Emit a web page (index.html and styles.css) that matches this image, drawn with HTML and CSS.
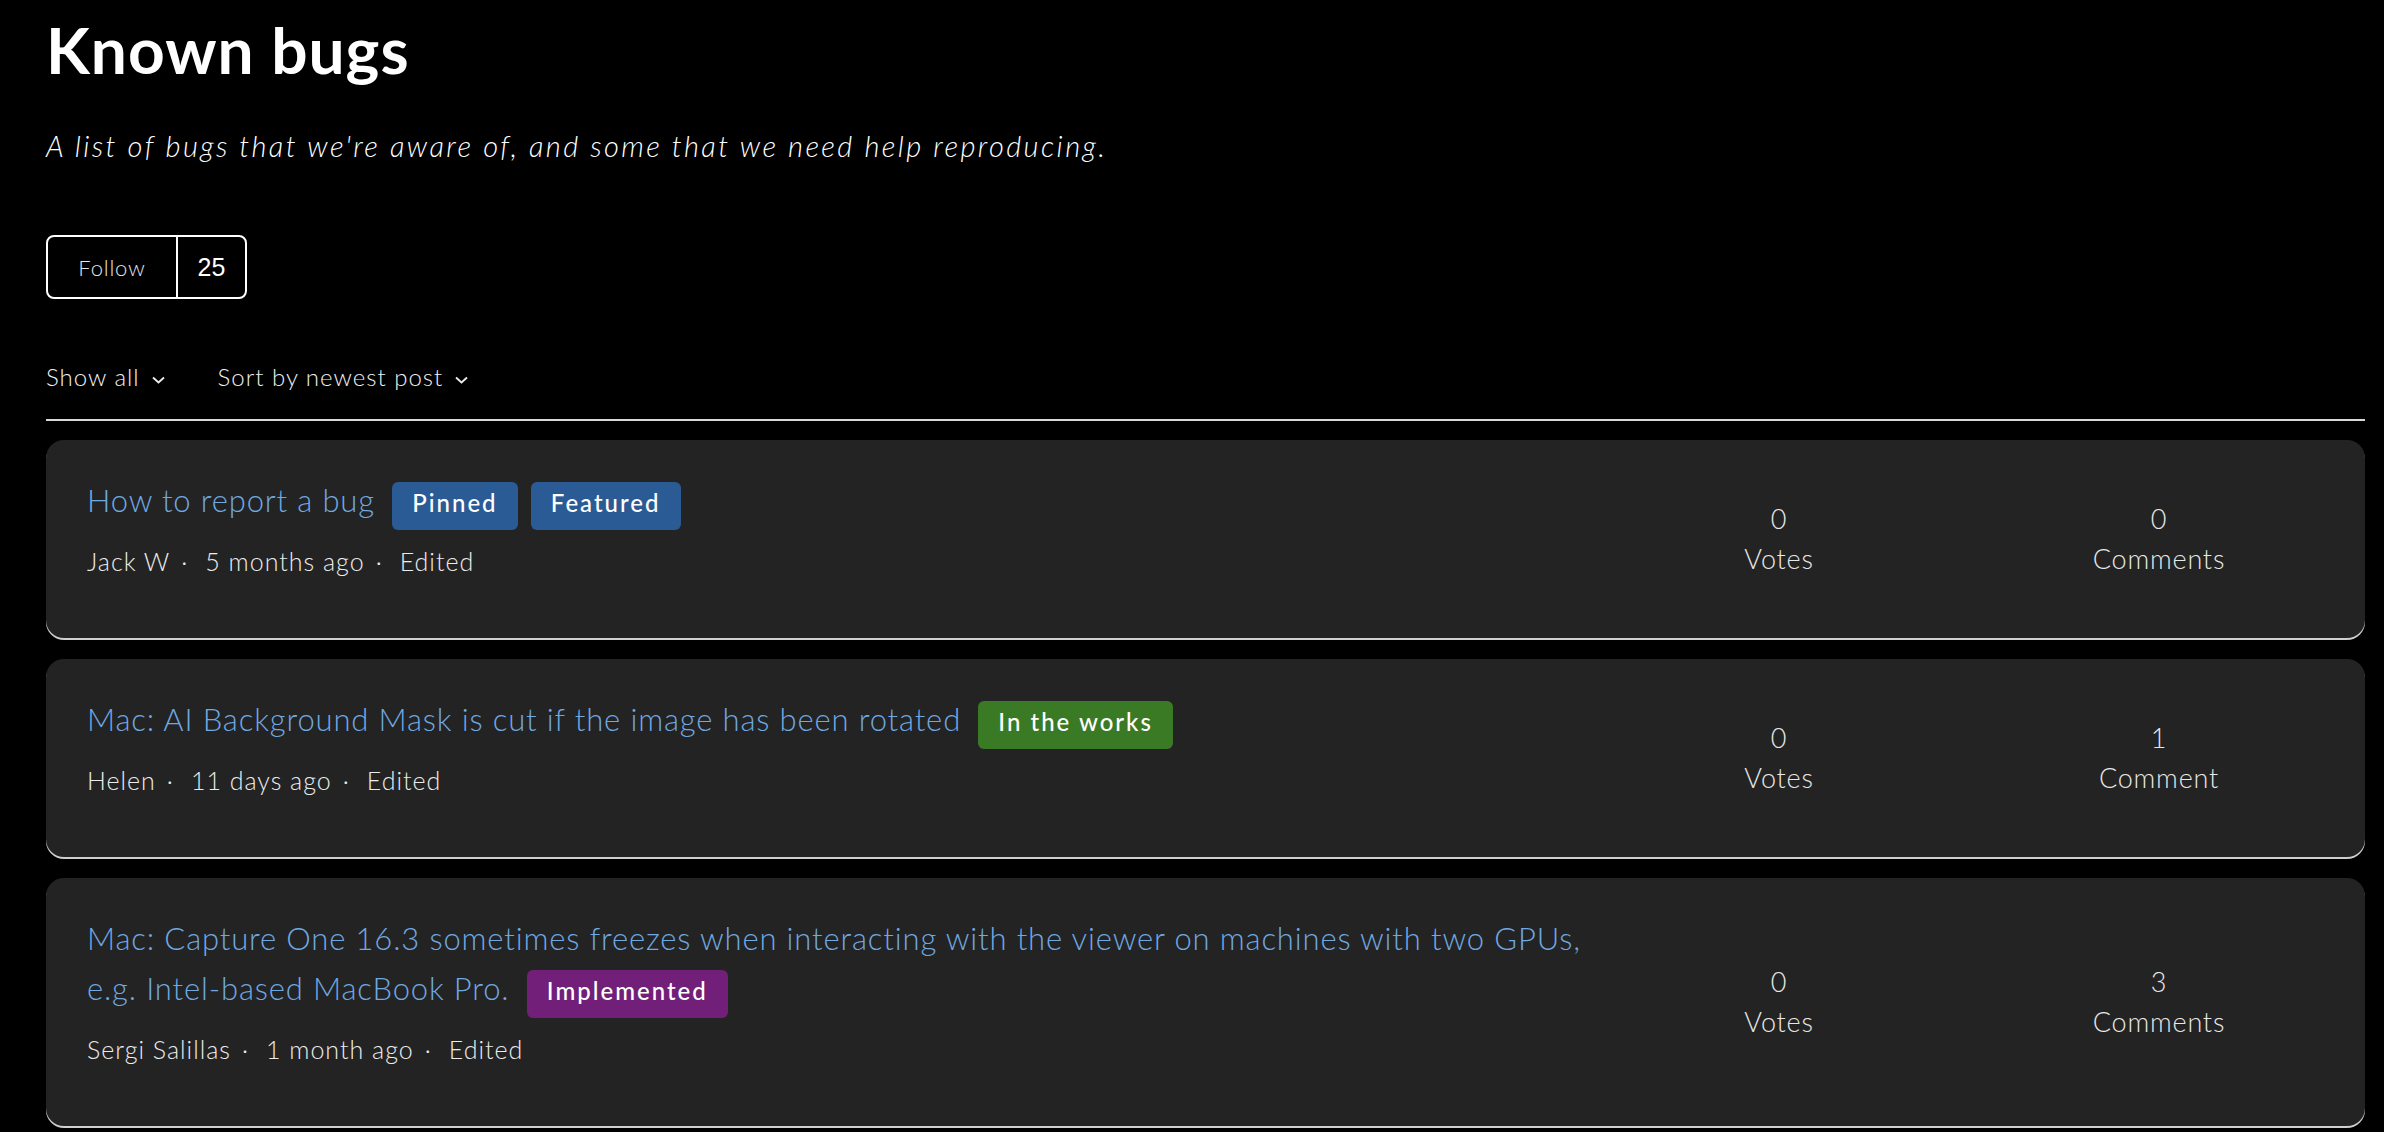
FILE: index.html
```html
<!DOCTYPE html>
<html lang="en">
<head>
    <meta charset="UTF-8">
    <meta name="viewport" content="width=device-width, initial-scale=1.0">
    <title>Known bugs</title>
    <link rel="stylesheet" href="styles.css">
</head>
<body>
    <div class="page">
        <div class="category-header">
            <h1>Known bugs</h1>
            <p class="description">A list of bugs that we're aware of, and some that we need help reproducing.</p>
            <div class="follow-button">
                <span class="follow-label">Follow</span>
                <span class="follow-count">25</span>
            </div>
        </div>

        <div class="filters">
            <button class="filter" type="button">
                Show all
                <svg class="chevron" viewBox="0 0 14 8"><path d="M1.5 1.5 L7 6.5 L12.5 1.5"/></svg>
            </button>
            <button class="filter" type="button">
                Sort by newest post
                <svg class="chevron" viewBox="0 0 14 8"><path d="M1.5 1.5 L7 6.5 L12.5 1.5"/></svg>
            </button>
        </div>

        <ul class="post-list">
            <li class="post-card">
                <div class="post-main">
                    <div class="post-title">
                        <a href="#">How to report a bug</a>
                        <span class="badge badge-blue">Pinned</span>
                        <span class="badge badge-blue">Featured</span>
                    </div>
                    <div class="post-meta">
                        <span>Jack W</span>
                        <span>5 months ago</span>
                        <span>Edited</span>
                    </div>
                </div>
                <div class="post-stat">
                    <span class="stat-count">0</span>
                    <span class="stat-label">Votes</span>
                </div>
                <div class="post-stat">
                    <span class="stat-count">0</span>
                    <span class="stat-label">Comments</span>
                </div>
            </li>

            <li class="post-card">
                <div class="post-main">
                    <div class="post-title">
                        <a href="#">Mac: AI Background Mask is cut if the image has been rotated</a>
                        <span class="badge badge-green">In the works</span>
                    </div>
                    <div class="post-meta">
                        <span>Helen</span>
                        <span>11 days ago</span>
                        <span>Edited</span>
                    </div>
                </div>
                <div class="post-stat">
                    <span class="stat-count">0</span>
                    <span class="stat-label">Votes</span>
                </div>
                <div class="post-stat">
                    <span class="stat-count">1</span>
                    <span class="stat-label">Comment</span>
                </div>
            </li>

            <li class="post-card">
                <div class="post-main">
                    <div class="post-title">
                        <a href="#">Mac: Capture One 16.3 sometimes freezes when interacting with the viewer on machines with two GPUs, e.g. Intel-based MacBook Pro.</a>
                        <span class="badge badge-purple">Implemented</span>
                    </div>
                    <div class="post-meta">
                        <span>Sergi Salillas</span>
                        <span>1 month ago</span>
                        <span>Edited</span>
                    </div>
                </div>
                <div class="post-stat">
                    <span class="stat-count">0</span>
                    <span class="stat-label">Votes</span>
                </div>
                <div class="post-stat">
                    <span class="stat-count">3</span>
                    <span class="stat-label">Comments</span>
                </div>
            </li>
        </ul>
    </div>
</body>
</html>
```

FILE: styles.css
```css
* {
    margin: 0;
    padding: 0;
    box-sizing: border-box;
}

body {
    background: #000;
    color: #fff;
    font-family: Lato, "Open Sans", sans-serif;
}

.page {
    padding: 0 19px 0 46px;
}

.category-header h1 {
    font-size: 64px;
    line-height: 76px;
    font-weight: 700;
    letter-spacing: 1px;
    margin-top: 12px;
}

.description {
    font-size: 29px;
    line-height: 40px;
    font-style: italic;
    font-weight: 300;
    letter-spacing: 2.4px;
    color: #fff;
    margin-top: 38px;
}

.follow-button {
    display: inline-flex;
    margin-top: 69px;
    height: 64px;
    border: 2px solid #fff;
    border-radius: 8px;
}

.follow-label {
    width: 130px;
    display: flex;
    align-items: center;
    justify-content: center;
    font-size: 22px;
    font-weight: 300;
    letter-spacing: 0.8px;
    color: #e4e4e4;
    border-right: 2px solid #fff;
}

.follow-count {
    width: 67px;
    display: flex;
    align-items: center;
    justify-content: center;
    font-family: "Liberation Sans", Arial, sans-serif;
    font-size: 25px;
}

.filters {
    display: flex;
    gap: 52px;
    margin-top: 62px;
    padding-bottom: 26px;
    border-bottom: 2px solid #d8d8d8;
}

.filter {
    display: flex;
    align-items: center;
    gap: 11px;
    background: none;
    border: none;
    color: #f0f0f0;
    font-family: inherit;
    font-size: 24px;
    font-weight: 300;
    letter-spacing: 1px;
    line-height: 32px;
    cursor: pointer;
}

.chevron {
    width: 15px;
    height: 8px;
    margin-top: 5px;
    fill: none;
    stroke: #eee;
    stroke-width: 1.8;
}

.post-list {
    list-style: none;
    margin-top: 19px;
}

.post-card {
    display: flex;
    background: #232323;
    border-radius: 18px;
    box-shadow: 0 2px 0 #cfcfcf;
    padding-right: 16px;
    margin-bottom: 21px;
}

.post-main {
    flex: 1;
    padding: 35px 0 59px 41px;
}

.post-title {
    font-size: 31px;
    font-weight: 300;
    line-height: 50px;
    letter-spacing: 0.85px;
}

.post-title a {
    color: #6fa9e2;
    text-decoration: none;
    margin-right: 8px;
}

.badge {
    display: inline-block;
    height: 48px;
    line-height: 42px;
    padding: 0 20px 6px;
    margin-right: 4px;
    border-radius: 6px;
    font-size: 24px;
    font-weight: 500;
    letter-spacing: 2px;
    color: #fff;
}

.badge-blue {
    background: #2a5b95;
}

.badge-green {
    background: #3a7a24;
}

.badge-purple {
    background: #721f79;
}

.post-meta {
    display: flex;
    margin-top: 13px;
    font-size: 25px;
    font-weight: 300;
    letter-spacing: 1px;
    line-height: 36px;
    color: #ececec;
}

.post-meta span + span::before {
    content: "\00b7";
    margin: 0 17px 0 11px;
}

.post-stat {
    width: 380px;
    display: flex;
    flex-direction: column;
    align-items: center;
    justify-content: center;
    font-size: 27px;
    font-weight: 300;
    letter-spacing: 0.8px;
    line-height: 40px;
    color: #e8e8e8;
}
```
